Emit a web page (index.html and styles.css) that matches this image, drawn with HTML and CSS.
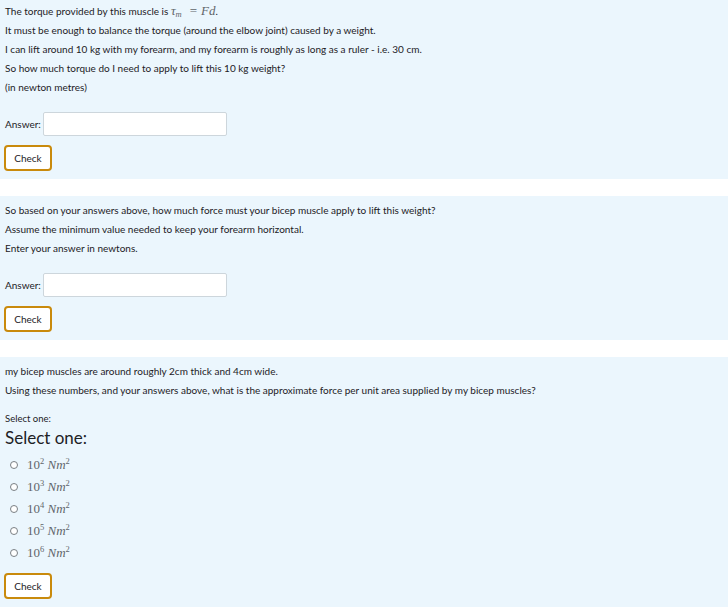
FILE: index.html
```html
<!DOCTYPE html>
<html lang="en">

<head>
    <meta charset="UTF-8">
    <meta name="viewport" content="width=device-width, initial-scale=1.0">
    <title>Bicep torque</title>
    <link rel="stylesheet" href="styles.css">
</head>

<body>
    <div class="que first">
        <p>The torque provided by this muscle is <span class="math"><i>τ</i><sub><i>m</i></sub><span class="eq">=</span><i>Fd</i></span>.</p>
        <p>It must be enough to balance the torque (around the elbow joint) caused by a weight.</p>
        <p>I can lift around 10 kg with my forearm, and my forearm is roughly as long as a ruler - i.e. 30 cm.</p>
        <p>So how much torque do I need to apply to lift this 10 kg weight?</p>
        <p>(in newton metres)</p>
        <div class="answer">
            <label>Answer:</label>
            <input type="text" class="answer-input">
        </div>
        <button class="check">Check</button>
    </div>

    <div class="que">
        <p>So based on your answers above, how much force must your bicep muscle apply to lift this weight?</p>
        <p>Assume the minimum value needed to keep your forearm horizontal.</p>
        <p>Enter your answer in newtons.</p>
        <div class="answer">
            <label>Answer:</label>
            <input type="text" class="answer-input">
        </div>
        <button class="check">Check</button>
    </div>

    <div class="que">
        <p>my bicep muscles are around roughly 2cm thick and 4cm wide.</p>
        <p>Using these numbers, and your answers above, what is the approximate force per unit area supplied by my bicep muscles?</p>
        <div class="prompt">Select one:</div>
        <div class="legend">Select one:</div>
        <div class="options">
            <label class="option"><span class="radio"></span><span class="math">10<sup>2</sup> <i>Nm</i><sup>2</sup></span></label>
            <label class="option"><span class="radio"></span><span class="math">10<sup>3</sup> <i>Nm</i><sup>2</sup></span></label>
            <label class="option"><span class="radio"></span><span class="math">10<sup>4</sup> <i>Nm</i><sup>2</sup></span></label>
            <label class="option"><span class="radio"></span><span class="math">10<sup>5</sup> <i>Nm</i><sup>2</sup></span></label>
            <label class="option"><span class="radio"></span><span class="math">10<sup>6</sup> <i>Nm</i><sup>2</sup></span></label>
        </div>
        <button class="check">Check</button>
    </div>
</body>

</html>
```

FILE: styles.css
```css
* {
    box-sizing: border-box;
    margin: 0;
    padding: 0;
}

body {
    background: #ffffff;
    color: #1d2125;
    font-family: 'Lato', sans-serif;
    font-size: 10px;
}

.que {
    background: #ebf6fd;
    padding: 5px 5px 8px 5px;
    margin-bottom: 17px;
}

.que.first {
    padding-top: 1px;
}

.que p {
    line-height: 19px;
}

.math {
    font-family: 'Liberation Serif', serif;
    font-size: 13px;
    color: #5f656a;
}

.math i {
    font-style: italic;
}

.math sub,
.math sup {
    font-size: 8.5px;
    line-height: 0;
}

.math sub {
    vertical-align: -2px;
}

.math sup {
    vertical-align: 5px;
}

.eq {
    padding: 0 4px 0 8px;
}

.answer {
    margin-top: 15px;
    display: flex;
    align-items: center;
    gap: 2px;
    height: 24px;
}

.answer label {
    color: #1d2125;
}

.answer-input {
    width: 184px;
    height: 24px;
    border: 1px solid #cdd6dc;
    border-radius: 2px;
    background: #ffffff;
}

.check {
    margin-top: 9px;
    margin-left: -1px;
    width: 48px;
    height: 26px;
    background: #ffffff;
    border: 2px solid #c98a0c;
    border-radius: 4px;
    font-family: 'Lato', sans-serif;
    font-size: 10px;
    color: #1d2125;
    display: block;
}

.prompt {
    margin-top: 9px;
    line-height: 19px;
    font-size: 9.5px;
}

.legend {
    font-size: 17px;
    line-height: 20px;
    height: 20px;
}

.options {
    margin-top: 6px;
    display: flex;
    flex-direction: column;
}

.option {
    height: 22px;
    display: flex;
    align-items: center;
    gap: 9px;
    padding-left: 5px;
}

.radio {
    width: 8px;
    height: 8px;
    border: 1px solid #7a7f84;
    border-radius: 50%;
    background: #ffffff;
}
```
